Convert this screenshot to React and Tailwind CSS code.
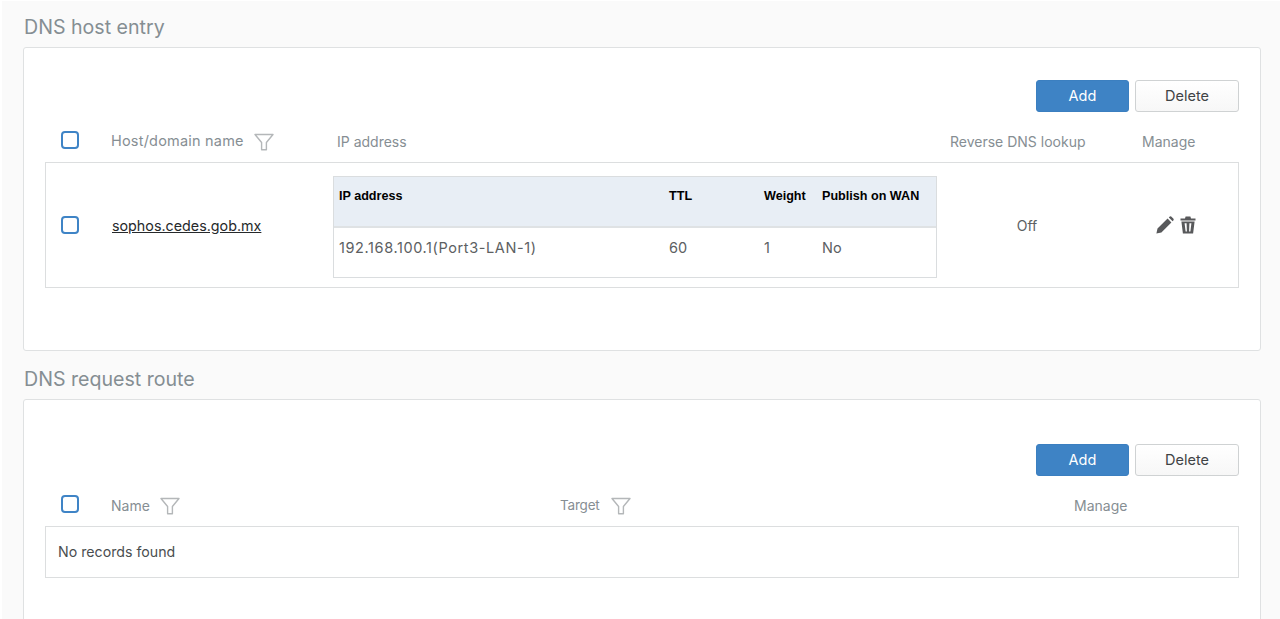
import React from "react";

const Filter = () => (
  <svg width="20" height="18" viewBox="0 0 20 18" className="shrink-0 mt-[4px]" fill="none" stroke="#b4b7b9" strokeWidth="1.4" strokeLinejoin="round">
    <path d="M1 1.5h18l-6.6 8v7.3h-4.8V9.5z" />
  </svg>
);

const Check = () => (
  <div className="w-[18px] h-[18px] rounded-[4px] border-2 border-[#3f84c6] bg-white shrink-0" />
);

const Pencil = () => (
  <svg width="18" height="18" viewBox="0 0 18 18">
    <path fill="#58595b" d="M0.4 17.6 L1.5 12.6 L11.6 2.6 L15.4 6.4 L5.4 16.5 Z M12.8 1.4 L13.8 0.5 Q14.5 0 15.2 0.5 L17.5 2.8 Q18 3.5 17.5 4.2 L16.6 5.2 Z" />
  </svg>
);

const Trash = () => (
  <svg width="16" height="18" viewBox="0 0 16 18">
    <path fill="#58595b" fillRule="evenodd" d="M0.5 2.4 H5 L5.6 0.6 H10.4 L11 2.4 H15.5 V4.4 H0.5 Z M1.4 5.4 H14.6 L13.1 17.6 H2.9 Z M4.6 7.2 L5.6 15.4 H6.9 L6.6 7.2 Z M9.4 7.2 L9.1 15.4 H10.4 L11.4 7.2 Z" />
  </svg>
);

const Button = ({ primary, children }) => (
  <button
    className={
      primary
        ? "w-[93px] h-[32px] rounded-[3px] bg-[#3e83c5] border border-[#3b7fc0] text-white text-[14.5px]"
        : "w-[104px] h-[32px] rounded-[3px] bg-gradient-to-b from-white to-[#f7f7f7] border border-[#cfd2d3] text-[#3f4345] text-[14.5px]"
    }
  >
    {children}
  </button>
);

const Actions = () => (
  <div className="flex justify-end gap-[6px] pr-[21px]">
    <Button primary>Add</Button>
    <Button>Delete</Button>
  </div>
);

const Title = ({ children }) => (
  <h2 className="text-[19.6px] leading-[28px] text-[#858e93] font-normal pl-[1px]">{children}</h2>
);

const heading = "text-[#868e93] mt-[3px]";
const HEAD_ROW = "grid items-center h-[50px] pt-[5px] pl-[16px] pr-[21px]";
const INNER_COLS = "grid grid-cols-[330px_95px_58px_1fr] pl-[5px]";

export default function App() {
  return (
    <div
      className="h-[619px] w-[1280px] overflow-hidden bg-[#fafafa] border-l-2 border-t border-white pl-[21px] pr-[19px] pt-[12px]"
      style={{ fontFamily: "Inter, sans-serif" }}
    >
      <Title>DNS host entry</Title>
      <section className="mt-[6px] h-[304px] rounded-[3px] border border-[#dfe1e2] bg-white pt-[32px] pl-[21px]">
        <Actions />
        <div className={`${HEAD_ROW} grid-cols-[50px_226px_613px_192px_1fr]`}>
          <Check />
          <div className="flex items-center gap-[10px]">
            <span className={`${heading} text-[14.5px] tracking-[0.2px]`}>Host/domain name</span>
            <Filter />
          </div>
          <span className={`${heading} text-[14px]`}>IP address</span>
          <span className={`${heading} text-[14px]`}>Reverse DNS lookup</span>
          <span className={`${heading} text-[14px]`}>Manage</span>
        </div>
        <div className="mr-[21px] h-[126px] border border-[#dcdedf] grid grid-cols-[51px_221px_604px_180px_1fr] items-center pl-[15px]">
          <Check />
          <a className="text-[14.3px] mt-[1px] text-[#26292b] underline">sophos.cedes.gob.mx</a>
          <div className="h-[102px] mt-[4px] border border-[#dadddf]">
            <div
              className={`${INNER_COLS} h-[51px] bg-[#e8eef5] border-b-2 border-[#dfe2e4] pt-[10px] text-[12.6px] font-bold text-black`}
              style={{ fontFamily: '"Liberation Sans", sans-serif' }}
            >
              <span>IP address</span>
              <span>TTL</span>
              <span>Weight</span>
              <span>Publish on WAN</span>
            </div>
            <div className={`${INNER_COLS} pt-[9px] text-[14.5px] text-[#5c6062]`}>
              <span className="tracking-[0.6px]">192.168.100.1(Port3-LAN-1)</span>
              <span>60</span>
              <span>1</span>
              <span>No</span>
            </div>
          </div>
          <span className="text-center text-[14px] mt-[1px] text-[#5c6062]">Off</span>
          <div className="flex items-center gap-[6px] pl-[39px]">
            <Pencil />
            <Trash />
          </div>
        </div>
      </section>

      <div className="mt-[14px]">
        <Title>DNS request route</Title>
      </div>
      <section className="mt-[6px] h-[300px] rounded-[3px] border border-[#dfe1e2] bg-white pt-[44px] pl-[21px]">
        <Actions />
        <div className={`${HEAD_ROW} grid-cols-[50px_449px_514px_1fr]`}>
          <Check />
          <div className="flex items-center gap-[10px]">
            <span className={`${heading} text-[14px]`}>Name</span>
            <Filter />
          </div>
          <div className="flex items-center gap-[11px]">
            <span className={`${heading} text-[13.5px] tracking-[-0.2px]`}>Target</span>
            <Filter />
          </div>
          <span className={`${heading} text-[14px]`}>Manage</span>
        </div>
        <div className="mr-[21px] h-[52px] border border-[#dcdedf] flex items-center pl-[12px] text-[14.2px] text-[#4a4e50]">
          No records found
        </div>
      </section>
    </div>
  );
}
